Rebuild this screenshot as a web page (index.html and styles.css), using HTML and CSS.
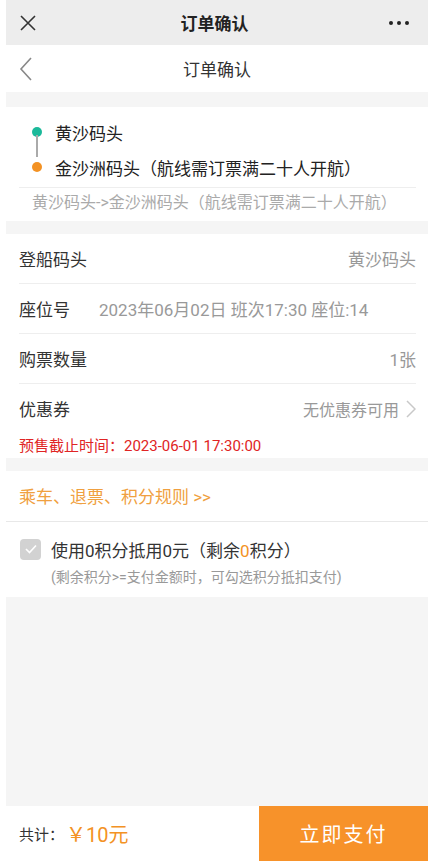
FILE: index.html
```html
<!DOCTYPE html>
<html lang="zh-CN">
<head>
    <meta charset="UTF-8">
    <title>订单确认</title>
    <link rel="stylesheet" href="styles.css">
</head>
<body>
    <div class="page">
        <div class="topbar">
            <svg class="icon-close" width="16" height="16" viewBox="0 0 16 16">
                <path d="M1 1L15 15M15 1L1 15" stroke="#333" stroke-width="1.6" fill="none"/>
            </svg>
            <span class="topbar-title">订单确认</span>
            <svg class="icon-more" width="20" height="4" viewBox="0 0 20 4">
                <circle cx="2" cy="2" r="2" fill="#222"/>
                <circle cx="10" cy="2" r="2" fill="#222"/>
                <circle cx="18" cy="2" r="2" fill="#222"/>
            </svg>
        </div>
        <div class="navbar">
            <svg class="icon-back" width="14" height="24" viewBox="0 0 14 24">
                <path d="M12 1L2 12L12 23" stroke="#888" stroke-width="1.6" fill="none"/>
            </svg>
            <span class="navbar-title">订单确认</span>
        </div>
        <div class="gap gap-top"></div>

        <div class="route">
            <div class="stop">
                <span class="dot dot-start"></span>
                <span>黄沙码头</span>
            </div>
            <div class="stop">
                <span class="dot dot-end"></span>
                <span>金沙洲码头（航线需订票满二十人开航）</span>
            </div>
            <div class="route-line"></div>
            <div class="route-summary">黄沙码头-&gt;金沙洲码头（航线需订票满二十人开航）</div>
        </div>
        <div class="gap"></div>

        <div class="info">
            <div class="row">
                <span class="label">登船码头</span>
                <span class="value">黄沙码头</span>
            </div>
            <div class="row">
                <span class="label label-fixed">座位号</span>
                <span class="value value-left">2023年06月02日 班次17:30 座位:14</span>
            </div>
            <div class="row">
                <span class="label">购票数量</span>
                <span class="value">1张</span>
            </div>
            <div class="row row-last">
                <span class="label">优惠券</span>
                <span class="value value-small">无优惠券可用
                    <svg class="icon-arrow" width="10" height="18" viewBox="0 0 10 18">
                        <path d="M1 1L9 9L1 17" stroke="#c8c8c8" stroke-width="1.5" fill="none"/>
                    </svg>
                </span>
            </div>
            <div class="deadline">预售截止时间：2023-06-01 17:30:00</div>
        </div>
        <div class="gap"></div>

        <div class="rules">乘车、退票、积分规则 &gt;&gt;</div>

        <div class="points">
            <div class="points-main">
                <span class="checkbox">
                    <svg width="12" height="10" viewBox="0 0 12 10">
                        <path d="M1 5L4.5 8.5L11 1.5" stroke="#fff" stroke-width="1.6" fill="none"/>
                    </svg>
                </span>
                <span>使用0积分抵用0元（剩余<em class="accent">0</em>积分）</span>
            </div>
            <div class="points-note">(剩余积分&gt;=支付金额时，可勾选积分抵扣支付)</div>
        </div>

        <div class="filler"></div>

        <div class="footer">
            <div class="total">共计：<span class="price">￥10元</span></div>
            <button class="pay">立即支付</button>
        </div>
    </div>
</body>
</html>
```

FILE: styles.css
```css
body {
    margin: 0;
    background: #fff;
    font-family: Roboto, "Noto Sans CJK SC", sans-serif;
    color: #333;
}
.page {
    width: 422px;
    height: 861px;
    margin: 0 6px;
    display: flex;
    flex-direction: column;
}
.topbar {
    height: 45px;
    flex: none;
    background: #ededed;
    display: grid;
    grid-template-columns: 1fr auto 1fr;
    align-items: center;
    padding: 0 19px 0 14px;
}
.topbar-title {
    font-size: 17px;
    font-weight: bold;
    color: #222;
}
.icon-more {
    justify-self: end;
}
.navbar {
    height: 47px;
    flex: none;
    display: flex;
    align-items: center;
    padding-left: 13px;
}
.navbar-title {
    flex: 1;
    text-align: center;
    font-size: 17px;
    color: #333;
    margin-right: 27px;
}
.gap {
    height: 13px;
    flex: none;
    background: #f5f5f5;
}
.gap-top {
    height: 15px;
}
.route {
    padding: 13px 12px 8px 13px;
}
.stop {
    display: flex;
    align-items: center;
    height: 24px;
    padding-left: 13px;
    font-size: 17px;
    color: #222;
    position: relative;
}
.stop + .stop {
    margin-top: 11px;
}
.stop + .stop::before {
    content: "";
    position: absolute;
    left: 17px;
    top: -20px;
    width: 2px;
    height: 22px;
    background: #aaa;
}
.dot {
    width: 10px;
    height: 10px;
    border-radius: 50%;
    margin-right: 13px;
}
.dot-start {
    background: #1bb99a;
}
.dot-end {
    background: #f39224;
}
.route-line {
    height: 1px;
    background: #eee;
    margin-top: 8px;
}
.route-summary {
    padding: 5px 0 0 13px;
    font-size: 16px;
    line-height: 20px;
    color: #aaa;
}
.info {
    padding: 0 12px 0 13px;
}
.row {
    height: 49px;
    display: flex;
    align-items: center;
    justify-content: space-between;
    border-bottom: 1px solid #eee;
    font-size: 17px;
}
.row-last {
    border-bottom: none;
}
.label {
    color: #333;
}
.label-fixed {
    width: 80px;
    flex: none;
}
.value {
    color: #999;
    display: flex;
    align-items: center;
}
.value-left {
    flex: 1;
}
.value-small {
    font-size: 16px;
}
.icon-arrow {
    margin-left: 7px;
}
.deadline {
    font-size: 15px;
    line-height: 20px;
    color: #e02424;
    padding: 3px 0 2px;
}
.rules {
    height: 48px;
    display: flex;
    align-items: center;
    padding-bottom: 2px;
    padding-left: 13px;
    font-size: 17px;
    color: #f0a040;
    border-bottom: 1px solid #e8e8e8;
}
.points {
    padding: 15px 13px 11px 14px;
}
.points-main {
    display: flex;
    align-items: center;
    height: 24px;
    font-size: 17px;
    color: #333;
}
.checkbox {
    width: 21px;
    height: 21px;
    border-radius: 4px;
    background: #d2d2d2;
    display: flex;
    align-items: center;
    justify-content: center;
    margin-right: 10px;
}
.accent {
    font-style: normal;
    color: #f39224;
}
.points-note {
    padding: 7px 0 0 31px;
    font-size: 14px;
    line-height: 18px;
    color: #999;
}
.filler {
    flex: 1;
    background: #f5f5f5;
}
.footer {
    height: 55px;
    flex: none;
    display: flex;
    align-items: stretch;
}
.total {
    flex: 1;
    display: flex;
    align-items: center;
    padding-left: 13px;
    font-size: 15px;
    color: #333;
}
.price {
    font-size: 20px;
    color: #f39224;
    margin-left: 2px;
}
.pay {
    width: 169px;
    border: none;
    background: #f7922a;
    color: #fff;
    font-family: Roboto, "Noto Sans CJK SC", sans-serif;
    font-size: 20px;
    letter-spacing: 2px;
}
```
